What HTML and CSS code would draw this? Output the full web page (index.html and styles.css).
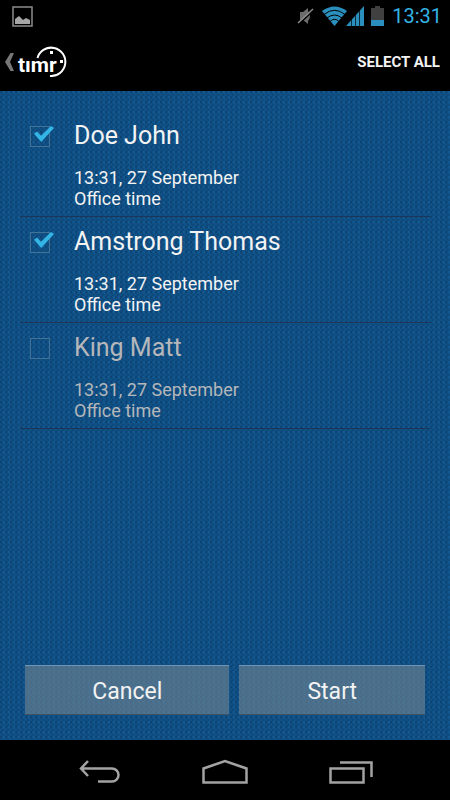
FILE: index.html
```html
<!DOCTYPE html>
<html lang="en">
<head>
<meta charset="utf-8">
<meta name="viewport" content="width=device-width, initial-scale=1">
<title>timr</title>
<link rel="stylesheet" href="styles.css">
</head>
<body>
<header>
  <div class="status">
    <svg class="shot" width="21" height="21" viewBox="0 0 21 21"><path d="M1 1h19v19H1z" fill="none" stroke="#8c8c8c" stroke-width="1.5"/><path d="M3 18v-5l4-3 4 4 3-2 4 2v4z" fill="#a6a6a6"/></svg>
    <div class="status-icons">
      <svg width="17" height="18" viewBox="0 0 17 18"><path d="M3 5h3l5-4v16l-5-4H3zM11 4q4 5 0 10z" fill="#6c6c6c"/><path d="M2 17 17 3" stroke="#000" stroke-width="1.5"/><path d="M1 16 16 2" stroke="#8a8a8a" stroke-width="1.5"/></svg>
      <svg class="wifi" width="25" height="20" viewBox="0 0 25 20"><path d="M0 5Q12.500-4 25 5L12.500 20z" fill="#2b8fbd"/><path d="M2 8.500Q12.500 0 23 8.500M5 12Q12.500 6 20 12M8 15.500Q12.500 11 17 15.500" fill="none" stroke="#000" stroke-width="1"/></svg>
      <svg class="signal" width="18" height="20" viewBox="0 0 18 20"><path d="M0 20 18 0v20z" fill="#2b8fbd"/><path d="M5.500 10v10M9.500 6v14M13.500 2v18" stroke="#000" stroke-width=".7"/></svg>
      <svg class="battery" width="13" height="20" viewBox="0 0 13 20"><path d="M0 2h4V0h5v2h4v12H0z" fill="#404040"/><path d="M0 14h13v6H0z" fill="#2b8fbd"/></svg>
      <span class="clock">13:31</span>
    </div>
  </div>
  <div class="bar">
    <a class="brand" href="#" aria-label="Back">
      <svg width="70" height="36" viewBox="0 0 70 36"><path d="M10.500 9h3.500l-4 9 4 9h-3.500L5 18z" fill="#777"/><text class="logo" x="18" y="28">tımr</text><path d="M37.500 14A14.200 14.200 0 1 1 50 32" fill="none" stroke="#fff" stroke-width="2"/><path d="M50 7h3v3h-3zM60 16h3v3h-3z" fill="#fff"/></svg>
    </a>
    <button class="select-all" type="button">SELECT ALL</button>
  </div>
</header>
<main>
  <ul class="people">
    <li><label class="person"><input type="checkbox" checked><span class="name">Doe John</span><span class="detail">13:31, 27 September<br>Office time</span></label></li>
    <li><label class="person"><input type="checkbox" checked><span class="name">Amstrong Thomas</span><span class="detail">13:31, 27 September<br>Office time</span></label></li>
    <li><label class="person off"><input type="checkbox"><span class="name">King Matt</span><span class="detail">13:31, 27 September<br>Office time</span></label></li>
  </ul>
  <div class="actions">
    <button type="button">Cancel</button>
    <button type="button">Start</button>
  </div>
</main>
<nav>
  <button type="button" aria-label="Back"><svg width="44" height="26" viewBox="0 0 44 26"><path d="M11 2 4 9.500 11 17M4 9.500H35a6.250 6.250 0 0 1 0 13H21" fill="none" stroke="#a3a3a3" stroke-width="2.500"/></svg></button>
  <button type="button" aria-label="Home"><svg width="46" height="26" viewBox="0 0 46 26"><path d="M1.500 23.500V9.500L23 2 44.500 9.500v14z" fill="none" stroke="#a3a3a3" stroke-width="2.500"/></svg></button>
  <button type="button" aria-label="Recent apps"><svg width="44" height="26" viewBox="0 0 44 26"><path d="M1.500 9.500h33v14h-33zM11 3.500h31.500V18" fill="none" stroke="#a3a3a3" stroke-width="2.500"/></svg></button>
</nav>
</body>
</html>
```
FILE: styles.css
```css
* { box-sizing: border-box; }
body {
  margin: 0;
  min-height: 100vh;
  display: flex;
  flex-direction: column;
  background: #000;
  color: #f3f3f3;
  font-family: Roboto, sans-serif;
}
svg { display: block; }
button {
  border: 0;
  padding: 0;
  background: none;
  color: inherit;
  font-family: inherit;
}
.status {
  display: flex;
  justify-content: space-between;
  align-items: center;
  height: 32px;
  padding: 0 8px 0 12px;
}
.status-icons { display: flex; align-items: center; }
.wifi { margin-left: 8px; }
.signal { margin-left: -1px; }
.battery { margin-left: 7px; }
.clock {
  margin-left: 8px;
  color: #33b5e5;
  font-size: 20px;
  line-height: 32px;
}
.bar {
  display: flex;
  justify-content: space-between;
  align-items: center;
  height: 59px;
  padding-right: 10px;
}
.logo { font: bold 21px Roboto, sans-serif; fill: #fff; }
.select-all { font-size: 15px; font-weight: 700; }
main {
  flex: 1;
  display: flex;
  flex-direction: column;
  padding: 20px 20px 25px;
  background-color: #105288;
  background-image:
    radial-gradient(circle at 1px 1px, #0a2f5599 0, #0a2f5500 2px),
    radial-gradient(circle at 3px 4px, #0b3d6899 0, #0b3d6800 2px),
    radial-gradient(circle at 4px 1px, #1a68a480 0, #1a68a400 2px);
  background-size: 5px 5px;
}
.people { margin: 0; padding: 0; list-style: none; }
.people li { border-bottom: 1px solid #1d3556; }
.person {
  display: grid;
  grid-template-columns: 44px 1fr;
  padding: 10px 0 7px 10px;
  row-gap: 16px;
}
.person input {
  appearance: none;
  width: 20px;
  height: 21px;
  margin: 5px 0 0;
  border: 1px solid #427397;
}
.person input:checked {
  position: relative;
}
.person input:checked::after {
  content: "";
  position: absolute;
  left: 3px;
  top: -1px;
  width: 20px;
  height: 16px;
  background: #33b5e5;
  clip-path: polygon(0 48%, 15% 34%, 35% 61%, 85% 0, 100% 13%, 36% 100%);
}
.name { font-size: 25px; line-height: 30px; }
.detail { grid-column: 2; font-size: 18px; line-height: 21px; }
.off { color: #b5b7ba; }
.actions {
  display: grid;
  grid-template-columns: 205fr 186fr;
  gap: 10px;
  margin: auto 5px 0;
}
.actions button {
  height: 50px;
  padding-top: 2px;
  border-top: 1px solid #7195b5;
  border-bottom: 1px solid #3f5365;
  background: #7f8d9488;
  font-size: 23px;
}
nav {
  display: grid;
  grid-template-columns: repeat(3, 126px);
  justify-content: center;
  height: 60px;
}
nav button { display: grid; place-items: center; padding-top: 4px; }
```
